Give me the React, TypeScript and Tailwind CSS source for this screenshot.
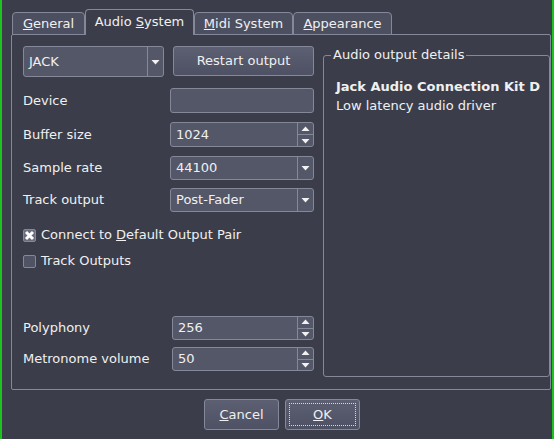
type BoxProps = { value: string; w: string; h: string; spin?: boolean };

const Down = () => (
	<svg width="9" height="6" viewBox="0 0 9 6">
		<polygon points="0.5,1 8.5,1 4.5,5.5" fill="#f2f2f2" />
	</svg>
);

const Up = () => (
	<svg width="9" height="6" viewBox="0 0 9 6">
		<polygon points="0.5,5 8.5,5 4.5,0.5" fill="#f2f2f2" />
	</svg>
);

// combo box or spin box, same frame
const Field: React.FC<BoxProps> = ({ value, w, h, spin }) => {
	return (
		<div className={`${w} ${h} flex border border-[#858898] rounded-[3px] bg-[#545768]`}>
			<div className="flex-1 flex items-center pl-[5px] whitespace-nowrap">{value}</div>
			{spin ? (
				<div className="w-[16px] flex flex-col border-l border-[#858898]">
					<div className="flex-1 flex items-center justify-center border-b border-[#858898]">
						<Up />
					</div>
					<div className="flex-1 flex items-center justify-center">
						<Down />
					</div>
				</div>
			) : (
				<div className="w-[16px] flex items-center justify-center border-l border-[#858898]">
					<Down />
				</div>
			)}
		</div>
	);
};

const Row: React.FC<{ label: string; mt: string; children: React.ReactNode }> = ({ label, mt, children }) => (
	<div className={`flex items-center justify-between ${mt}`}>
		<span>{label}</span>
		{children}
	</div>
);

const Check: React.FC<{ checked?: boolean; children: React.ReactNode; mt: string }> = ({ checked, children, mt }) => (
	<div className={`flex items-center h-[18px] gap-[5px] ${mt}`}>
		<div className={`w-[13px] h-[13px] border border-[#858898] rounded-[2px] flex items-center justify-center ${checked ? "bg-[#6a6d7e]" : "bg-[#505364]"}`}>
			{checked && (
				<svg width="11" height="11" viewBox="0 0 11 11">
					<path d="M2 2 L9 9 M9 2 L2 9" stroke="#ffffff" strokeWidth="3" />
				</svg>
			)}
		</div>
		<span>{children}</span>
	</div>
);

const btn = "border border-[#858898] rounded-[3px] bg-gradient-to-b from-[#5d6072] to-[#4e5163] flex items-center justify-center";

export default function App() {
	return (
		<div className="w-[554px] h-[439px] bg-[#3b3e4a] border-x-2 border-[#1ec21e] flex flex-col text-[13px] leading-[16px] text-[#f0f0f0] font-['DejaVu_Sans',sans-serif] overflow-hidden">
			{/* tabs */}
			<div className="relative z-10 -mb-px ml-[10px] mt-[9px] flex items-end h-[26px]">
				<div className="w-[73px] h-[23px] border border-[#858898] rounded-t-[4px] bg-[#4c4f60] flex items-center justify-center">
					<span><u>G</u>eneral</span>
				</div>
				<div className="w-[109px] h-[26px] border border-b-0 border-[#858898] rounded-t-[4px] bg-[#3b3e4a] flex items-center justify-center pb-[2px]">
					<span>Audio <u>S</u>ystem</span>
				</div>
				<div className="w-[99px] h-[23px] border border-[#858898] rounded-t-[4px] bg-[#4c4f60] flex items-center justify-center">
					<span><u>M</u>idi System</span>
				</div>
				<div className="w-[99px] h-[23px] border border-[#858898] rounded-t-[4px] bg-[#4c4f60] flex items-center justify-center">
					<span><u>A</u>ppearance</span>
				</div>
			</div>

			{/* pane */}
			<div className="ml-[9px] w-[540px] h-[356px] border border-[#858898] rounded-[2px] flex pl-[11px] pt-[11px] overflow-hidden">
				<div className="w-[291px] shrink-0 flex flex-col">
					<div className="flex gap-[9px]">
						<Field value="JACK" w="w-[141px]" h="h-[31px]" />
						<div className={`${btn} w-[141px] h-[30px]`}>Restart output</div>
					</div>
					<Row label="Device" mt="mt-[11px]">
						<div className="w-[144px] h-[25px] border border-[#858898] rounded-[3px] bg-[#545768]" />
					</Row>
					<Row label="Buffer size" mt="mt-[9px]">
						<Field value="1024" w="w-[144px]" h="h-[25px]" spin />
					</Row>
					<Row label="Sample rate" mt="mt-[9px]">
						<Field value="44100" w="w-[144px]" h="h-[24px]" />
					</Row>
					<Row label="Track output" mt="mt-[8px]">
						<Field value="Post-Fader" w="w-[144px]" h="h-[24px]" />
					</Row>
					<Check checked mt="mt-[14px]">
						Connect to <u>D</u>efault Output Pair
					</Check>
					<Check mt="mt-[8px]">Track Outputs</Check>
					<Row label="Polyphony" mt="mt-[46px]">
						<Field value="256" w="w-[142px]" h="h-[24px]" spin />
					</Row>
					<Row label="Metronome volume" mt="mt-[7px]">
						<Field value="50" w="w-[142px]" h="h-[24px]" spin />
					</Row>
				</div>

				{/* details group */}
				<fieldset className="ml-[9px] mt-[1px] w-[227px] h-[330px] shrink-0 border border-[#858898] rounded-[3px] pl-[12px] pt-[14px]">
					<legend className="ml-[-5px] px-[2px]">Audio output details</legend>
					<div className="leading-[19px] whitespace-nowrap">
						<div className="font-bold">Jack Audio Connection Kit D</div>
						<div>Low latency audio driver</div>
					</div>
				</fieldset>
			</div>

			{/* dialog buttons */}
			<div className="mt-[9px] pl-[202px] flex gap-[6px]">
				<div className={`${btn} w-[75px] h-[31px]`}>
					<span><u>C</u>ancel</span>
				</div>
				<div className={`${btn} w-[75px] h-[31px] p-[3px]`}>
					<div className="flex-1 self-stretch border border-dotted border-[#d8d8d8] flex items-center justify-center">
						<span><u>O</u>K</span>
					</div>
				</div>
			</div>
		</div>
	);
}
